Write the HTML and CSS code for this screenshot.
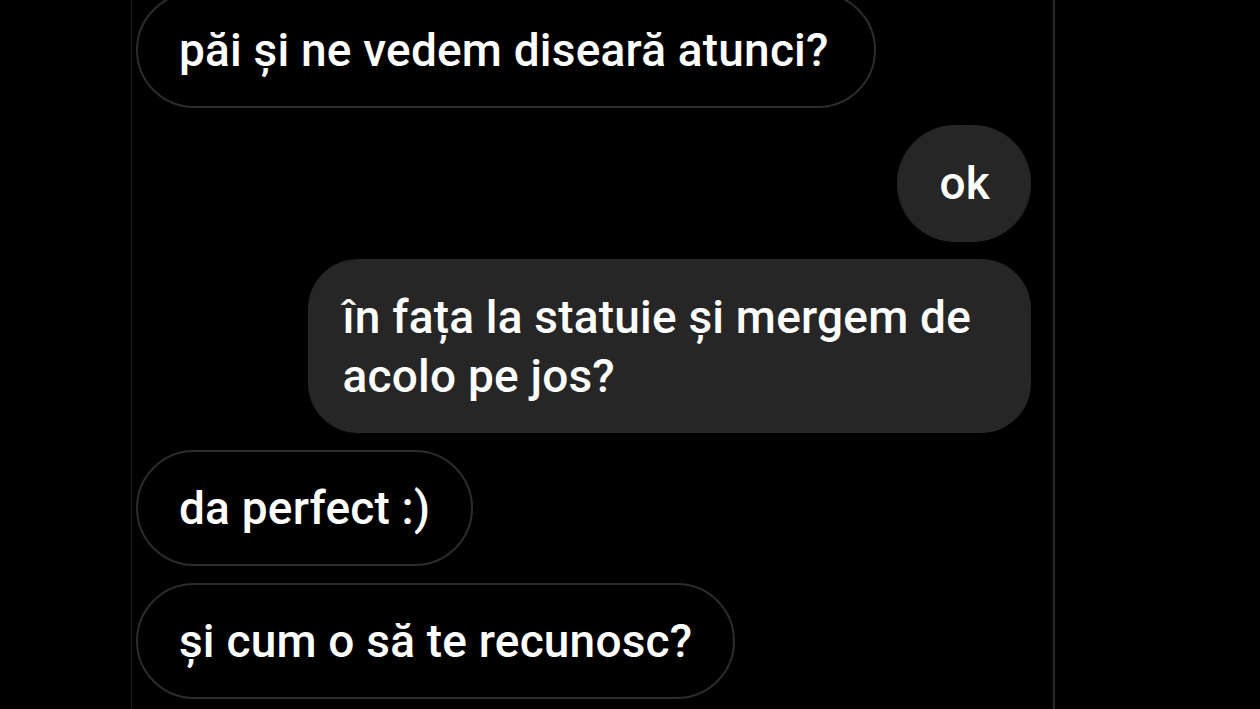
FILE: index.html
```html
<!DOCTYPE html>
<html lang="ro">
<head>
<meta charset="utf-8">
<title>Chat</title>
<link rel="stylesheet" href="styles.css">
</head>
<body>
<div class="page">
  <div class="panel">
    <div class="msg in first">păi și ne vedem diseară atunci?</div>
    <div class="msg out ok">ok</div>
    <div class="msg out wide">în fața la statuie și mergem de<br>acolo pe jos?</div>
    <div class="msg in">da perfect :)</div>
    <div class="msg in">și cum o să te recunosc?</div>
  </div>
</div>
</body>
</html>
```
FILE: styles.css
```css
html, body {
  margin: 0;
  padding: 0;
  background: #000;
  height: 100%;
  overflow: hidden;
}
.page {
  width: 1260px;
  height: 709px;
  background: #000;
  overflow: hidden;
}
.panel {
  margin-left: 131px;
  width: 924px;
  height: 709px;
  border-left: 1px solid #1c1c1c;
  border-right: 2px solid #2a2a2a;
  display: flex;
  flex-direction: column;
  gap: 17px;
  padding: 0 22px 0 4px;
  box-sizing: border-box;
}
.msg {
  font-family: Roboto, "Noto Sans", "Liberation Sans", sans-serif;
  font-weight: 500;
  font-size: 46px;
  letter-spacing: 0.2px;
  line-height: 59px;
  color: #fff;
  border-radius: 58px;
  box-sizing: border-box;
  white-space: nowrap;
}
.first {
  margin-top: -8px;
  padding-right: 45px !important;
}
.in {
  align-self: flex-start;
  border: 2px solid #2c2c2c;
  background: #000;
  padding: 27px 41px 26px 41px;
}
.out {
  align-self: flex-end;
  background: #262626;
}
.ok {
  padding: 29px 41px 29px 43px;
}
.wide {
  border-radius: 50px;
  padding: 29px 60px 27px 35px;
}
```
